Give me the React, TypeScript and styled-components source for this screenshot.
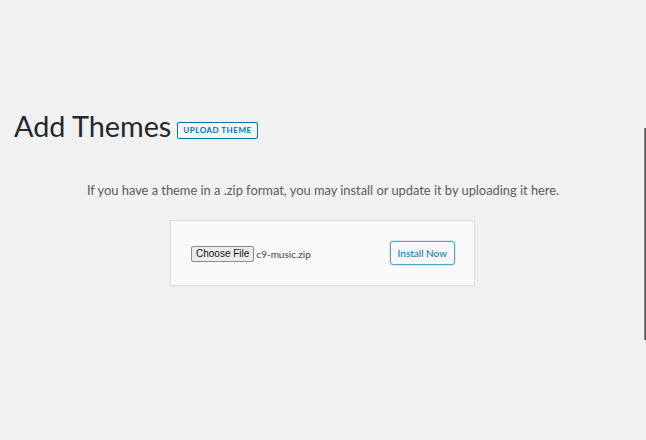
import React from "react";
import styled, { createGlobalStyle } from "styled-components";

const Global = createGlobalStyle`
  html, body { margin: 0; padding: 0; background: #f1f1f1; }
  body { font-family: Lato, "Open Sans", sans-serif; color: #23282d; }
`;

const Page = styled.div`
  position: relative;
  width: 646px;
  height: 440px;
  overflow: hidden;
  background: #f1f1f1;
  padding-top: 106px;
  box-sizing: border-box;
`;

const HeaderRow = styled.div`
  display: flex;
  align-items: center;
  gap: 6px;
  padding-left: 14px;
`;

const Title = styled.h1`
  margin: 0;
  font-family: Lato, sans-serif;
  font-weight: 400;
  font-size: 28.8px;
  line-height: 40px;
  color: #23282d;
`;

const UploadButton = styled.button`
  margin-top: 8px;
  height: 17px;
  padding: 0 5px;
  border: 1px solid #0073aa;
  border-radius: 2px;
  background: #f7f7f7;
  color: #0073aa;
  font-family: Lato, sans-serif;
  font-weight: 700;
  font-size: 8px;
  letter-spacing: 0.5px;
  text-transform: uppercase;
  line-height: 15px;
`;

const Help = styled.p`
  margin: 36px 0 0;
  text-align: center;
  font-family: Lato, sans-serif;
  font-size: 12.85px;
  color: #555d66;
`;

const UploadBox = styled.div`
  margin: 22px 0 0 170px;
  width: 305px;
  height: 66px;
  box-sizing: border-box;
  border: 1px solid #dddddd;
  background: #fafafa;
  display: flex;
  align-items: center;
  justify-content: space-between;
  padding: 0 19px 0 20px;
`;

const FileField = styled.div`
  display: flex;
  align-items: center;
  gap: 2px;
  margin-top: 2px;
`;

const ChooseButton = styled.span`
  display: inline-block;
  height: 14px;
  padding: 0 4px;
  border: 1px solid #8c8c8c;
  border-radius: 2px;
  background: #ececec;
  font-family: "Liberation Sans", Arial, sans-serif;
  font-size: 10px;
  line-height: 14px;
  color: #111;
`;

const FileName = styled.span`
  font-family: Lato, sans-serif;
  font-size: 10px;
  color: #444;
`;

const InstallButton = styled.button`
  height: 24px;
  padding: 0 7px;
  border: 1px solid #5ba3c7;
  border-radius: 3px;
  background: #f7f7f7;
  color: #0073aa;
  font-family: Lato, sans-serif;
  font-size: 10px;
  box-shadow: 0 0 0 1px #d6e8f1;
`;

const EdgeLine = styled.div`
  position: absolute;
  right: 0;
  top: 128px;
  width: 2px;
  height: 212px;
  background: linear-gradient(to right, #9a9a9a, #3a3a3a);
`;

export default function App() {
  return (
    <Page>
      <Global />
      <HeaderRow>
        <Title>Add Themes</Title>
        <UploadButton>Upload Theme</UploadButton>
      </HeaderRow>
      <Help>If you have a theme in a .zip format, you may install or update it by uploading it here.</Help>
      <UploadBox>
        <FileField>
          <ChooseButton>Choose File</ChooseButton>
          <FileName>c9-music.zip</FileName>
        </FileField>
        <InstallButton>Install Now</InstallButton>
      </UploadBox>
      <EdgeLine />
    </Page>
  );
}
